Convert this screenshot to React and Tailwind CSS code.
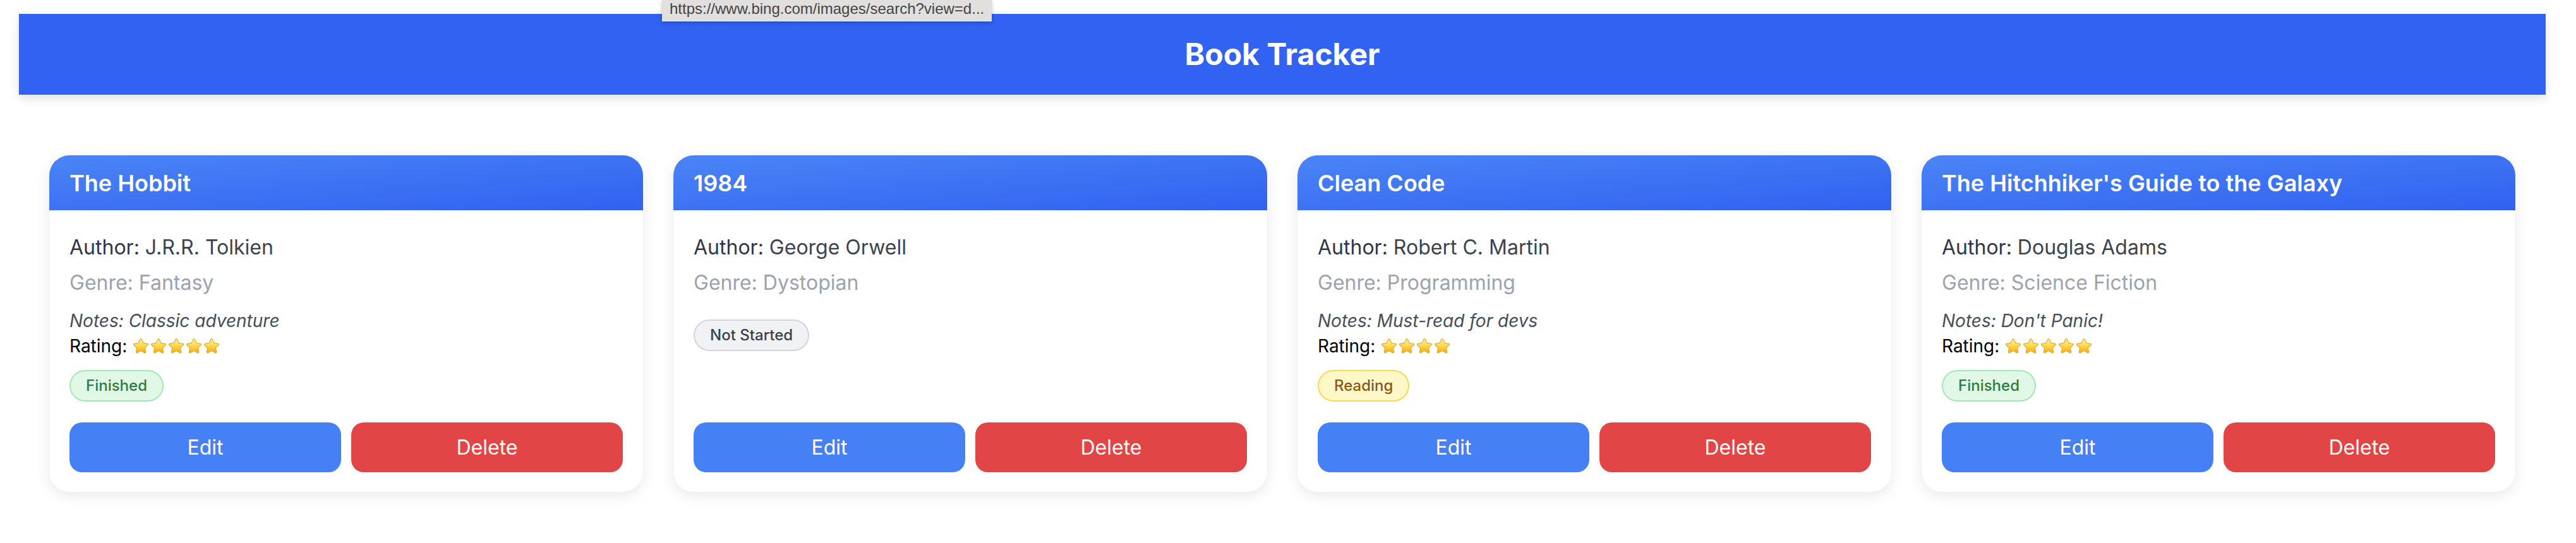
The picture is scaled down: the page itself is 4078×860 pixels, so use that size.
import React from 'react';

const books = [
  { id: 1, title: 'The Hobbit', author: 'J.R.R. Tolkien', genre: 'Fantasy', notes: 'Classic adventure', rating: 5, status: 'Finished' },
  { id: 2, title: '1984', author: 'George Orwell', genre: 'Dystopian', status: 'Not Started' },
  { id: 3, title: 'Clean Code', author: 'Robert C. Martin', genre: 'Programming', notes: 'Must-read for devs', rating: 4, status: 'Reading' },
  { id: 4, title: "The Hitchhiker's Guide to the Galaxy", author: 'Douglas Adams', genre: 'Science Fiction', notes: "Don't Panic!", rating: 5, status: 'Finished' },
];

// badge colours per reading status
const statusStyles = {
  Finished: 'bg-[#e1f8e7] border-[#a3e8b3] text-[#2e7d3c]',
  Reading: 'bg-[#fef8c8] border-[#f6db4f] text-[#8a5714]',
  'Not Started': 'bg-[#f1f2f4] border-[#d2d5db] text-[#364152]',
};

const Star = () => (
  <svg width="28" height="28" viewBox="0 0 24 24" className="block">
    <path
      d="M12 2.2c.4 0 .7.2.9.6l2.5 5.2 5.6.8c.9.1 1.2 1.1.6 1.7l-4.1 4 1 5.6c.2.9-.8 1.5-1.5 1.1L12 18.5l-5 2.7c-.8.4-1.7-.2-1.5-1.1l1-5.6-4.1-4c-.6-.6-.3-1.6.6-1.7l5.6-.8 2.5-5.2c.2-.4.5-.6.9-.6z"
      fill="url(#starFill)"
      stroke="#e9a21c"
      strokeWidth="0.9"
    />
  </svg>
);

const BookCard = ({ book }) => (
  <div className="flex flex-col bg-white rounded-[32px] overflow-hidden shadow-[0_6px_22px_rgba(0,0,0,0.09)]">
    <div className="h-[87px] flex items-center px-[32px] bg-linear-to-br from-[#4b84f6] to-[#3161f0]">
      <h2 className="text-[36px] font-semibold text-white leading-[44px]">{book.title}</h2>
    </div>
    <div className="flex flex-col flex-1 px-[32px] pt-[35px] pb-[31px]">
      <p className="text-[32px] leading-[48px] text-[#3b4350] mb-[8px]">
        <span className="text-[#2f3744]">Author:</span> {book.author}
      </p>
      <p className="text-[32px] leading-[48px] text-[#9ca3af] mb-[16px]">Genre: {book.genre}</p>
      {book.notes && (
        <p className="text-[28px] leading-[40px] italic text-[#454d5a]">Notes: {book.notes}</p>
      )}
      {book.rating && (
        <div className="flex items-center h-[40px] text-[28px] text-black">
          Rating:
          <span className="flex ml-[8px]">
            {Array.from({ length: book.rating }).map((_, i) => (
              <Star key={i} />
            ))}
          </span>
        </div>
      )}
      <div className="mt-[18px]">
        <span
          className={`inline-block rounded-full border-2 px-[24px] py-[7px] text-[24px] leading-[32px] font-medium ${statusStyles[book.status]}`}
        >
          {book.status}
        </span>
      </div>
      <div className="mt-auto pt-[33px] flex gap-[16px]">
        <button className="flex-1 h-[79px] rounded-[20px] bg-[#4680f5] text-white text-[32px]">Edit</button>
        <button className="flex-1 h-[79px] rounded-[20px] bg-[#e24545] text-white text-[32px]">Delete</button>
      </div>
    </div>
  </div>
);

export default function App() {
  return (
    <div className="relative min-h-screen bg-white pl-[30px] pr-[48px] pt-[22px] font-['Inter',sans-serif]">
      <svg width="0" height="0" className="absolute">
        <defs>
          <linearGradient id="starFill" x1="0" y1="0" x2="0" y2="1">
            <stop offset="0" stopColor="#fff6b0" />
            <stop offset="0.5" stopColor="#ffd84a" />
            <stop offset="1" stopColor="#f3ab1c" />
          </linearGradient>
        </defs>
      </svg>

      {/* Header */}
      <header className="h-[128px] flex items-center justify-center bg-[#3162f1] shadow-[0_6px_14px_rgba(0,0,0,0.12)]">
        <h1 className="text-[48px] font-bold text-white">Book Tracker</h1>
      </header>

      {/* Book cards */}
      <main className="grid grid-cols-4 gap-[48px] px-[48px] pt-[96px] pb-[48px]">
        {books.map((book) => (
          <BookCard key={book.id} book={book} />
        ))}
      </main>

      {/* browser link tooltip */}
      <div className="absolute top-0 left-[1048px] min-w-[515px] h-[34px] bg-[#e1e0de] shadow-[0_2px_6px_rgba(0,0,0,0.25)] px-[12px] font-['Liberation_Sans',sans-serif] text-[24px] leading-[28px] text-[#444] whitespace-nowrap">
        https://www.bing.com/images/search?view=d...
      </div>
    </div>
  );
}
